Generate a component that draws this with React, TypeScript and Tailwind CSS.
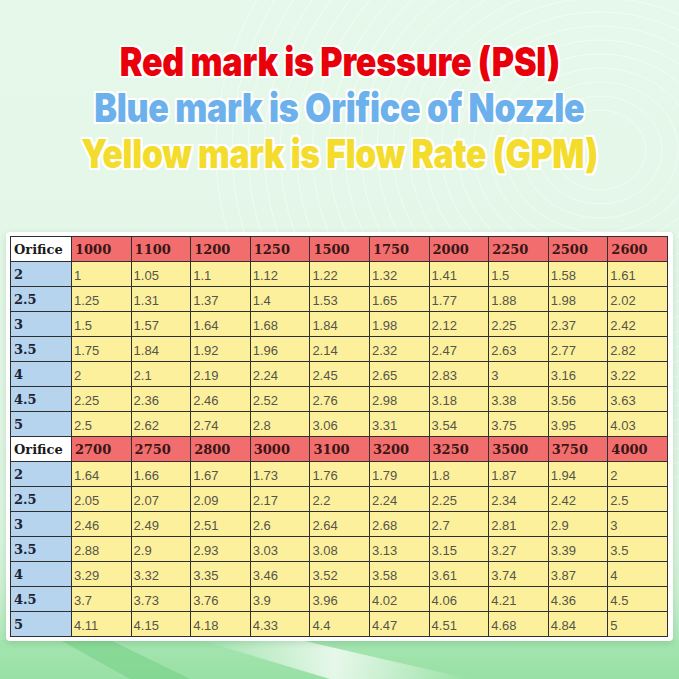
import React from "react";

// Pressure / flow chart data
const blocks = [
  {
    psi: ["1000", "1100", "1200", "1250", "1500", "1750", "2000", "2250", "2500", "2600"],
    rows: [
      ["2", "1", "1.05", "1.1", "1.12", "1.22", "1.32", "1.41", "1.5", "1.58", "1.61"],
      ["2.5", "1.25", "1.31", "1.37", "1.4", "1.53", "1.65", "1.77", "1.88", "1.98", "2.02"],
      ["3", "1.5", "1.57", "1.64", "1.68", "1.84", "1.98", "2.12", "2.25", "2.37", "2.42"],
      ["3.5", "1.75", "1.84", "1.92", "1.96", "2.14", "2.32", "2.47", "2.63", "2.77", "2.82"],
      ["4", "2", "2.1", "2.19", "2.24", "2.45", "2.65", "2.83", "3", "3.16", "3.22"],
      ["4.5", "2.25", "2.36", "2.46", "2.52", "2.76", "2.98", "3.18", "3.38", "3.56", "3.63"],
      ["5", "2.5", "2.62", "2.74", "2.8", "3.06", "3.31", "3.54", "3.75", "3.95", "4.03"],
    ],
  },
  {
    psi: ["2700", "2750", "2800", "3000", "3100", "3200", "3250", "3500", "3750", "4000"],
    rows: [
      ["2", "1.64", "1.66", "1.67", "1.73", "1.76", "1.79", "1.8", "1.87", "1.94", "2"],
      ["2.5", "2.05", "2.07", "2.09", "2.17", "2.2", "2.24", "2.25", "2.34", "2.42", "2.5"],
      ["3", "2.46", "2.49", "2.51", "2.6", "2.64", "2.68", "2.7", "2.81", "2.9", "3"],
      ["3.5", "2.88", "2.9", "2.93", "3.03", "3.08", "3.13", "3.15", "3.27", "3.39", "3.5"],
      ["4", "3.29", "3.32", "3.35", "3.46", "3.52", "3.58", "3.61", "3.74", "3.87", "4"],
      ["4.5", "3.7", "3.73", "3.76", "3.9", "3.96", "4.02", "4.06", "4.21", "4.36", "4.5"],
      ["5", "4.11", "4.15", "4.18", "4.33", "4.4", "4.47", "4.51", "4.68", "4.84", "5"],
    ],
  },
];

const outline =
  "[text-shadow:2px_2px_0_#fff,-2px_-2px_0_#fff,2px_-2px_0_#fff,-2px_2px_0_#fff,0_2px_0_#fff,2px_0_0_#fff,0_-2px_0_#fff,-2px_0_0_#fff,0_0_4px_#fff]";

function Backdrop() {
  const rings = Array.from({ length: 22 }, (_, i) => 40 + i * 14);
  return (
    <svg className="absolute inset-0" width="679" height="679" viewBox="0 0 679 679">
      <defs>
        <linearGradient id="bottomGreen" x1="0" y1="0" x2="0" y2="1">
          <stop offset="0" stopColor="#e3f7e6" stopOpacity="0" />
          <stop offset="0.5" stopColor="#c4efcb" stopOpacity="0.5" />
          <stop offset="1" stopColor="#8fdd9d" />
        </linearGradient>
        <linearGradient id="band" x1="0" y1="0" x2="1" y2="0">
          <stop offset="0" stopColor="#ffffff" stopOpacity="0" />
          <stop offset="0.5" stopColor="#ffffff" stopOpacity="0.75" />
          <stop offset="1" stopColor="#ffffff" stopOpacity="0" />
        </linearGradient>
      </defs>
      <g fill="none" stroke="#ffffff" strokeOpacity="0.6" strokeWidth="0.8">
        {rings.map((r) => (
          <ellipse key={r} cx="600" cy="150" rx={r * 1.15} ry={r} />
        ))}
      </g>
      <rect x="0" y="480" width="679" height="199" fill="url(#bottomGreen)" />
      <rect x="0" y="640" width="679" height="39" fill="#9fe3aa" opacity="0.6" />
      <polygon points="200,640 300,640 470,679 330,679" fill="url(#band)" />
      <polygon points="60,640 110,640 190,679 130,679" fill="#6fce80" opacity="0.5" />
    </svg>
  );
}

const head = "border border-[#2f2f2f] pl-[3px] font-['DejaVu_Serif',serif] font-bold text-[13px] leading-none";

export default function App() {
  return (
    <div className="relative w-[679px] h-[679px] overflow-hidden bg-gradient-to-b from-[#e6f8ea] via-[#e2f6e6] to-[#d6f2db]">
      <Backdrop />

      <div className="relative flex flex-col items-center">
        {/* Legend */}
        <div
          className={`pt-[39px] h-[232px] flex flex-col items-center font-['Inter',sans-serif] font-black text-[40px] leading-[46px] tracking-[-0.3px] ${outline}`}
        >
          <p className="text-[#e8000b] scale-x-[0.85] whitespace-nowrap">Red mark is Pressure (PSI)</p>
          <p className="text-[#6cb1ec] scale-x-[0.85] whitespace-nowrap">Blue mark is Orifice of Nozzle</p>
          <p className="text-[#f3dc2c] scale-x-[0.84] whitespace-nowrap">Yellow mark is Flow Rate (GPM)</p>
        </div>

        {/* Chart card */}
        <div className="w-[667px] bg-white rounded-[4px] p-[4px] shadow-[0_2px_6px_rgba(0,80,20,0.15)]">
          <table className="w-[657px] table-fixed border-collapse">
            <colgroup>
              <col className="w-[61px]" />
              {Array.from({ length: 10 }, (_, i) => (
                <col key={i} className="w-[59.6px]" />
              ))}
            </colgroup>
            <tbody>
              {blocks.map((b, bi) => (
                <React.Fragment key={bi}>
                  <tr className="h-[25px]">
                    <td className={`${head} bg-white text-[#1a1a1a]`}>Orifice</td>
                    {b.psi.map((p) => (
                      <td key={p} className={`${head} bg-[#f26e6e] text-[#3a1616]`}>
                        {p}
                      </td>
                    ))}
                  </tr>
                  {b.rows.map((r) => (
                    <tr key={r[0]} className="h-[25px]">
                      <td className={`${head} bg-[#b6d4ee] text-[#1d2333]`}>{r[0]}</td>
                      {r.slice(1).map((v, i) => (
                        <td
                          key={i}
                          className="border border-[#2f2f2f] bg-[#fdf09c] pl-[2px] pt-[2px] font-['Liberation_Sans',sans-serif] text-[13px] text-[#55554a] leading-none"
                        >
                          {v}
                        </td>
                      ))}
                    </tr>
                  ))}
                </React.Fragment>
              ))}
            </tbody>
          </table>
        </div>
      </div>
    </div>
  );
}
